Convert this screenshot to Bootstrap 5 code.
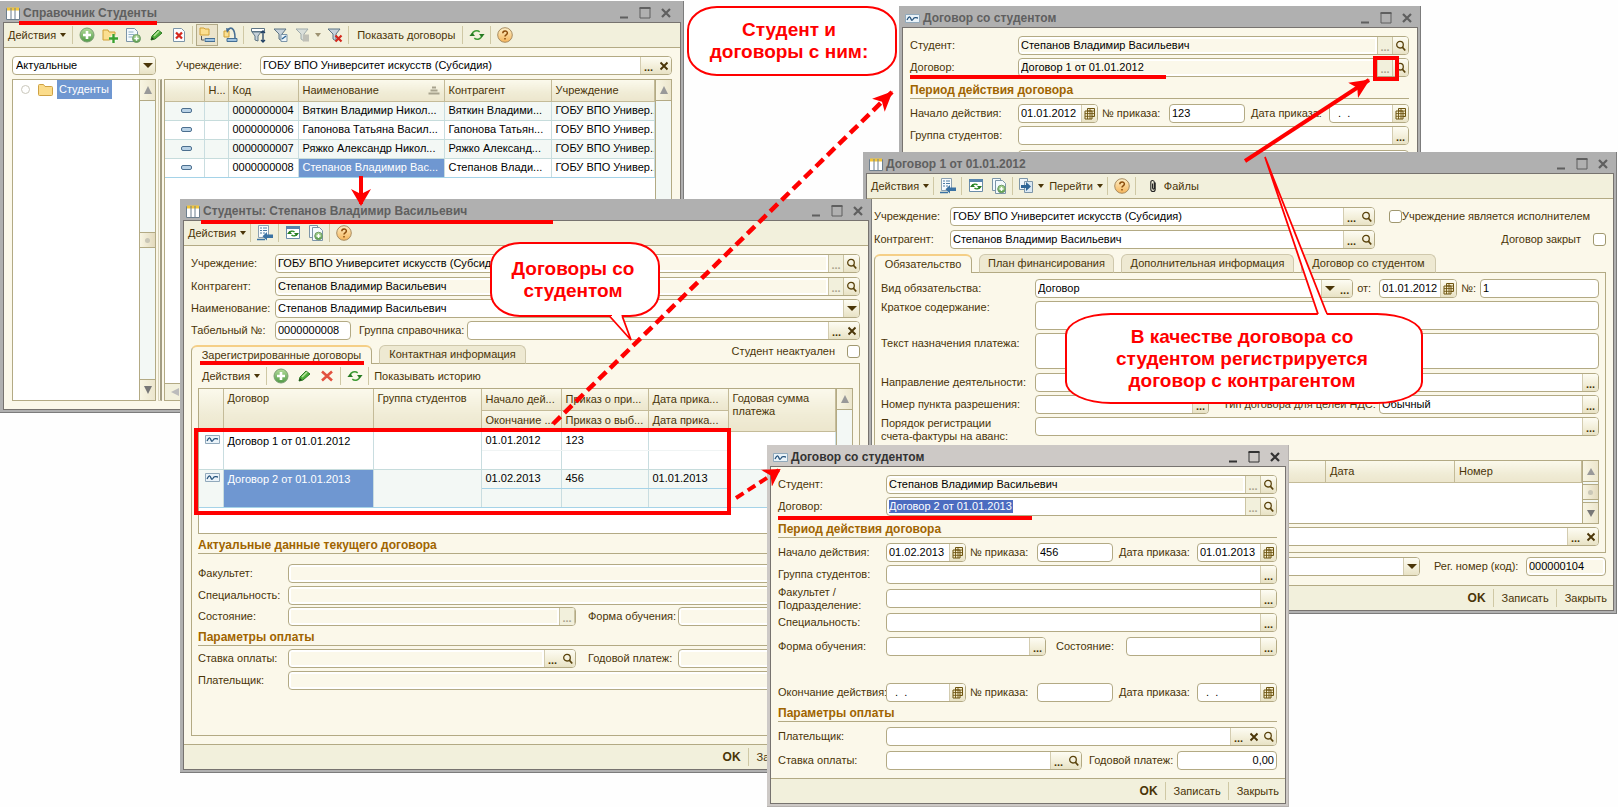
<!DOCTYPE html>
<html lang="ru">
<head>
<meta charset="utf-8">
<meta name="viewport" content="width=device-width, initial-scale=1">
<title>Справочник Студенты</title>
<link rel="stylesheet" href="https://cdn.jsdelivr.net/npm/bootstrap@5.3.0/dist/css/bootstrap.min.css">
<style>
:root{--ink:#4a3508;--line:#b3aa84;--cream:#fbf8ea;--bar:#f2f0dc;--red:#ff0000;--sel:#6f97d1}
body{background:#fefefe;font-family:"Liberation Sans",Arial,sans-serif;font-size:11px;line-height:13px;color:var(--ink)}
.desktop{position:relative;min-height:100vh;overflow:hidden}
.desktop svg{flex:none;display:block}
/* windows */
.win{position:absolute;background:#b0b0b0;padding:0 3px 3px;display:flex;flex-direction:column;border-right:1px solid #7c7c7c;border-bottom:1px solid #7c7c7c;--lab:108px}
.win-front{background:#cdc9c6;border-color:#b5b1ae}
.win-title{height:21px;padding:3px 5px 0 3px;font-weight:700;font-size:12px;color:#5f5f5f;gap:4px}
.win-title>svg:first-child{margin-right:-1px}
.win-front .win-title{color:#333}
.win-title span{flex:1}
.win-title button,.tbtn,.fld button,.sb button,.foot button,.tabx button{border:0;background:none;padding:0;color:inherit;line-height:inherit;font-size:inherit}
.win-title button{width:12px;height:12px;margin-left:5px}
.win-in{border:1px solid #77736f;margin-right:-1px;margin-bottom:-1px;background:var(--cream)}
.w-list{left:0;top:1px;width:684px;height:412px}
.w-card{left:899px;top:6px;width:522px;height:362px}
.w-contract{left:863px;top:152px;width:754px;height:462px}
.w-student{left:180px;top:199px;width:692px;height:574px}
.w-front{left:767px;top:445px;width:522px;height:362px}
.w-student{--lab:84px}.w-contract{--lab:76px}
/* toolbars */
.tbar{height:25px;background:var(--bar);border-bottom:1px solid var(--line);gap:5px;padding:0 4px}
.tbar-in{height:24px;background:none;border:0}
.tbtn{display:flex;align-items:center;justify-content:center;min-width:18px;height:22px;gap:4px;white-space:nowrap}
.tbtn.act{padding-right:2px}
.tbtn.txt{padding:0 3px}
.tbtn.on{min-width:22px;background:#ebe4cc;border:1px solid #b1a987;margin:0 -2px}
.tsep{width:1px;height:18px;margin:0 0 0 -1px;background:#cfc8a4}
.tri{width:0;height:0;border:3px solid transparent;border-top:4px solid var(--ink);border-bottom:0;flex:none}
.fld .tri{border-width:5px 5px 0}
/* form rows */
.pad{padding:8px 8px 0 7px}
.w-contract .pad{padding-right:7px}
.frow{display:flex;align-items:center;min-height:19px}
.frow>label{flex:none;white-space:nowrap}
.lab{width:var(--lab)}
.sect{height:20px;border-bottom:1px solid var(--line);font-weight:700;font-size:12px;color:#a06400;display:flex;align-items:flex-end;padding-bottom:1px;margin:0;line-height:13px}
.s2{margin-bottom:2px}.s3{margin-bottom:3px}.s4{margin-bottom:4px}.s5{margin-bottom:5px}.s10{margin-bottom:10px}.s27{margin-bottom:27px}
.fld{display:flex;height:19px;border:1px solid var(--line);border-radius:4px;background:#fff;overflow:hidden;min-width:0}
.fld.grow{flex:1 1 0}
.fld input,.fld select,.area{flex:1 1 0;min-width:0;border:0;background:none;padding:0 2px;color:#000;font-size:11px;line-height:15px;outline:0}
.fld select{appearance:none;padding:0 3px}
.fld.ro input{background:var(--cream);margin:2px;padding:0}
.fld button,.drop{width:15px;flex:none;background:linear-gradient(#fdfcf3,#f3efda 55%,#e8e2c5);display:flex;align-items:center;justify-content:center;font-weight:700}
.fld input+button,.fld select+.drop{border-left:1px solid #d3ccb0;width:16px}
.fld button.dots{padding-top:3px}
.fld button.off{color:#aaa58c;background:#f2f0dc;border:solid #cbc4a3;border-width:0 1px}
.area{height:29px;border:1px solid var(--line);border-radius:4px;background:#fff;resize:none;display:block}
.area.tall{height:36px}
.w80{width:80px}.w76{width:76px}
.chk{width:13px;height:13px;margin:0;appearance:none;border:1px solid #a09870;border-radius:3px;background:#fff;flex:none}
.picked{max-width:124px;height:13px;background:#4c6cc0!important;color:#fff!important}
/* tabs */
.tabx{display:flex;height:19px;gap:7px;margin-bottom:-1px;position:relative}
.tabx button{height:19px;background:#eee9d2;border:1px solid #cfc8ac;border-bottom-color:var(--line);border-radius:6px 6px 0 0;text-align:center;white-space:nowrap}
.tabx button.active{background:var(--cream);border-color:var(--line);border-top:2px solid #f5cf87;border-bottom:0}
.panel{border:1px solid var(--line);padding:0 6px}
.foot{height:25px;background:var(--bar);border-top:1px solid var(--line);display:flex;justify-content:flex-end;align-items:center;padding-right:6px;gap:8px}
.foot button{white-space:nowrap}
.foot .fw-bold{font-size:12px}
/* tables */
.box{border:1px solid var(--line);background:#fff;display:flex;overflow:hidden;min-height:0}
.grid{table-layout:fixed;width:100%;border-collapse:collapse;margin:0;color:#000}
.grid th,.grid td{height:19px;padding:0 0 0 4px;border-right:1px solid #c9dde0;border-bottom:1px solid #c6dcdc;overflow:hidden;white-space:nowrap;text-overflow:ellipsis;font-weight:400;line-height:13px;vertical-align:middle}
.grid th{height:21px;background:linear-gradient(#fbf9ec,#f0ecd6 60%,#ece6cd);border-color:#c4bb98;color:var(--ink)}
.grid td svg{margin:auto}
.grid td.open{text-overflow:clip}
.grid .tint td{background:#f3f8f5}
.grid .tint td.cur,.grid td.cur{background:var(--sel);color:#fff}
.grid .now td{border-bottom-color:#a5d3e8}
.hbar{height:17px;background:var(--bar);border-top:1px solid var(--line);padding-left:6px}
.sb{width:16px;flex:none;border-left:1px solid var(--line);background:#f3f8f5;display:flex;flex-direction:column}
.sb button{height:21px;background:linear-gradient(90deg,#f8f5e3,#ece6cd);border-bottom:1px solid var(--line);display:flex;align-items:center;justify-content:center}
.sb button:last-child:not(:first-child){border-bottom:0;border-top:1px solid var(--line)}
.sb i{height:16px;background:linear-gradient(90deg,#f8f5e3,#e3dabd);border:1px solid var(--line);border-width:1px 0;display:flex;align-items:center;justify-content:center}
.sb i::after{content:"";width:5px;height:5px;border-radius:50%;background:#c9c6b6}
.treecol{width:144px;flex:none}
.splitter{width:4px;flex:none;border:1px solid #d8d3ba;border-right:2px solid #a39d83;margin:0 2px}
.sel-tag{background:var(--sel);color:#fff;padding:3px 3px 3px 2px}
/* contract window */
.kright{width:231px;padding-left:14px}
.kright label{white-space:nowrap}
.ktabs button:first-child{width:98px}.ktabs button:nth-child(2){width:135px}.ktabs button:nth-child(3){width:173px}.ktabs button:nth-child(4){width:135px}
.kpanel{--lab:154px;padding:6px}
.kdate{width:78px}.knum{width:119px}
.kty{width:220px}.ktype{padding-left:14px;width:170px}
.ktable{margin-top:24px;height:64px}
.kreg{padding-left:14px;width:106px}
/* student window */
.stabs button:first-child{width:181px}.stabs button:nth-child(2){width:147px}
.sgroup{padding-left:8px;width:116px}
.stable{height:146px}
.stable .top{vertical-align:top;padding-top:3px}
.stable .grid td.soft{border-bottom-color:#f0f4f4}
.w-student .panel{--lab:90px}
.shalf{width:288px}.smid{padding-left:12px;width:102px}
/* student contract window */
.two{height:19px}
.dlab{padding-left:6px;width:84px}
.dstate{padding-left:10px;width:80px}.dst{width:151px}
.dyear{padding-left:7px;width:95px}.dyr{width:100px}
/* annotations */
.note{position:absolute;border:2px solid var(--red);background:#fff;color:var(--red);font-weight:700;font-size:19px;line-height:22px;display:flex;align-items:center;justify-content:center;text-align:center}
.n1{left:687px;top:6px;width:210px;height:70px;border-radius:30px/24px;padding-right:6px}
.n2{left:490px;top:242px;width:170px;height:75px;border-radius:30px/24px;padding-right:4px}
.n3{left:1065px;top:313px;width:358px;height:91px;border-radius:46px/22px;padding-right:4px}
.marks{position:absolute;left:0;top:0;pointer-events:none}
</style>
</head>
<body>
<svg width="0" height="0" class="position-absolute" aria-hidden="true">
<defs>
<linearGradient id="gg" x2="0" y2="1"><stop stop-color="#b5dd9c"/><stop offset="1" stop-color="#4f9a45"/></linearGradient>
<linearGradient id="go" x2="0" y2="1"><stop stop-color="#fdf0c8"/><stop offset="1" stop-color="#f5b45a"/></linearGradient>
<symbol id="grid" viewBox="0 0 14 13"><path d="M.5 1.500h13v11h-13z" fill="#fff" stroke="#6d7f8e"/><path d="M1 .5h12v3H1z" fill="#f3c63a"/><path d="M5 1v11M9 1v11" stroke="#6d7f8e"/></symbol>
<symbol id="sig" viewBox="0 0 15 9"><path d="M.5.5h14v8H.5z" fill="#eaf3f9" stroke="#91a9bb"/><path d="M2 6c2-4 3-4 4-1s2 0 3-1 2 0 4 0" fill="none" stroke="#25527b" stroke-width="1.300"/></symbol>
<symbol id="min" viewBox="0 0 12 12"><path d="M2 9.500h8v2H2z" fill="currentColor"/></symbol>
<symbol id="max" viewBox="0 0 12 12"><path d="M1 1h10v10H1z" fill="none" stroke="currentColor"/><path d="M.5 1h11" stroke="currentColor" stroke-width="2"/></symbol>
<symbol id="cls" viewBox="0 0 12 12"><path d="M2 2l8 8M10 2l-8 8" stroke="currentColor" stroke-width="2.200"/></symbol>
<symbol id="add" viewBox="0 0 16 16"><circle cx="8" cy="8" r="7" fill="url(#gg)" stroke="#7d9f74"/><path d="M8 4v8M4 8h8" stroke="#fff" stroke-width="2.600"/></symbol>
<symbol id="fadd" viewBox="0 0 16 16"><path d="M1 3h5l1 2h6v8H1z" fill="#fbdf90" stroke="#d0a036"/><path d="M11.500 7.500v8M7.500 11.500h8" stroke="#fff" stroke-width="4"/><path d="M11.500 7v9M7 11.500h9" stroke="#3aa22f" stroke-width="2.400"/></symbol>
<symbol id="dadd" viewBox="0 0 16 16"><path d="M1.500 1.500h8l3 3v10h-11z" fill="#f4fafd" stroke="#7c95a8"/><path d="M3.500 5h5M3.500 7.500h6M3.500 10h4" stroke="#8fb0c6"/><circle cx="11.500" cy="11.500" r="4" fill="url(#gg)" stroke="#6f9a66"/><path d="M11.500 9.300v4.400M9.300 11.500h4.400" stroke="#fff" stroke-width="1.500"/></symbol>
<symbol id="ddadd" viewBox="0 0 16 16"><path d="M1.500.5h8v12h-8z" fill="#f4fafd" stroke="#7c95a8"/><path d="M4.500 2.500h7l3 3v10h-10z" fill="#f4fafd" stroke="#7c95a8"/><circle cx="10.500" cy="11" r="3.800" fill="url(#gg)" stroke="#6f9a66"/><path d="M10.500 9v4M8.500 11h4" stroke="#fff" stroke-width="1.400"/></symbol>
<symbol id="pen" viewBox="0 0 16 16"><path d="M3 13l1-4 6-6 4 3-7 6z" fill="#4fae3a" stroke="#2c7a24"/><path d="M6 9l5-5" stroke="#b6e59b" stroke-width="1.600"/><path d="M3 13l1-3 2 2z" fill="#1f3f18"/></symbol>
<symbol id="ddel" viewBox="0 0 16 16"><path d="M2.500 1.500h8l3 3v10h-11z" fill="#fafdff" stroke="#7c95a8"/><path d="M5 5.500l6 6M11 5.500l-6 6" stroke="#d5281d" stroke-width="2.300"/></symbol>
<symbol id="rx" viewBox="0 0 16 16"><path d="M3 3.500l10 9M13 3.500l-10 9" stroke="#e2513f" stroke-width="2.600"/></symbol>
<symbol id="tree" viewBox="0 0 16 16"><path d="M1 1h4l1 1h4v6H1z" fill="#fbdf90" stroke="#d0a036"/><path d="M2.500 9v4H5" fill="none" stroke="#555"/><path d="M6 11.500h10v3H6z" fill="#9fc3e0" stroke="#436e94"/></symbol>
<symbol id="move" viewBox="0 0 16 16"><path d="M2 4h5v6H2z" fill="#fbdf90" stroke="#d0a036"/><path d="M5 4c3-5 8-4 8 7" fill="none" stroke="#486f93" stroke-width="1.600"/><path d="M4 1l4 1-3 4z" fill="#486f93"/><path d="M5 11.500h10v3H5z" fill="#9fc3e0" stroke="#436e94"/></symbol>
<symbol id="flt" viewBox="0 0 16 16"><path d="M1 2h12L9 7v7l-3-2V7z" fill="#c7d2da" stroke="#5d7484"/></symbol>
<symbol id="flt1" viewBox="0 0 16 16"><path d="M1.500 1.500h13v3h-13z" fill="#fff" stroke="#5d7484"/><path d="M2 5h9L8 9v5l-3-1V9z" fill="#c7d2da" stroke="#5d7484"/><path d="M13 4v11M11 6l2-2 2 2M11 13l2 2 2-2" fill="none" stroke="#1f3f63" stroke-width="1.300"/></symbol>
<symbol id="rfr" viewBox="0 0 16 16"><path d="M3.300 7.500C3.500 4 8 2.600 10.700 4.800M12.700 8.500c-.2 3.500-4.700 4.900-7.400 2.700" fill="none" stroke="#3d9a33" stroke-width="1.500"/><path d="M10 7h5.600l-2.800 3.400zM.4 9H6L3.200 5.600z" fill="#267a22"/></symbol>
<symbol id="hlp" viewBox="0 0 16 16"><circle cx="8" cy="8" r="7.300" fill="url(#go)" stroke="#a88c60"/><path d="M5.800 6.300c0-3 4.600-3 4.600-.3C10.400 8 8 7.700 8 9.600M8 11v1.600" fill="none" stroke="#8c4d0c" stroke-width="1.500"/></symbol>
<symbol id="arr" viewBox="0 0 16 16"><path d="M1.500.5h10v12h-10z" fill="#f7fbfd" stroke="#8ba0b1"/><path d="M3 3h2M6 3h4M3 5.500h2M6 5.500h4M3 8h2M6 8h2" stroke="#4f7ea5"/><path d="M16 9.500h-6V7l-4.500 4.200L10 15.500V13h6z" fill="#3a72a3"/><path d="M0 14.500h8" stroke="#3a72a3" stroke-width="1.500"/></symbol>
<symbol id="wrf" viewBox="0 0 16 16"><path d="M1.500 1.500h13v12h-13z" fill="#fff" stroke="#6b8ca8"/><path d="M1 1h14v3H1z" fill="#5684ad"/><path d="M4 8.500c0-2.500 4-3 5.500-1.500M12 8.500c0 2.500-4 3-5.500 1.500" fill="none" stroke="#2e8c28" stroke-width="1.400"/><path d="M9 8h5l-2.500 3zM2 9h5L4.500 6z" fill="#267a22"/></symbol>
<symbol id="goto" viewBox="0 0 16 16"><path d="M1.500.5h8v11h-8z" fill="#eef5fa" stroke="#7c95a8"/><path d="M6.500 3.500h8v11h-8z" fill="#dbe9f3" stroke="#7c95a8"/><path d="M3 7h5V4l5 4.500L8 13v-3H3z" fill="#2f6697"/></symbol>
<symbol id="clip" viewBox="0 0 8 16"><path d="M6.500 4v8c0 3-5 3-5 0V4c0-3 4-3 4 0v6c0 2-2 2-2 0V5" fill="none" stroke="#222" stroke-width="1.300"/></symbol>
<symbol id="mag" viewBox="0 0 11 12"><circle cx="5" cy="4.700" r="3.300" fill="none" stroke="#5a430c" stroke-width="1.300"/><path d="M7.200 7l3 3.500" stroke="#5a430c" stroke-width="1.800"/></symbol>
<symbol id="cal" viewBox="0 0 11 12"><path d="M3.500.5h7v8h-7z" fill="#f6efcf" stroke="#6d5410"/><path d="M1 3h7v8H1z" fill="#f6efcf" stroke="#6d5410"/><path d="M1 5.600h9M1 8.300h9M3.500 1v10M6 1v10M3 3h7" stroke="#6d5410" stroke-width=".9"/></symbol>
<symbol id="xx" viewBox="0 0 10 10"><path d="M1.500 1.500l7 7M8.500 1.500l-7 7" stroke="#4a3508" stroke-width="1.900"/></symbol>
<symbol id="dash" viewBox="0 0 11 5"><rect x=".5" y=".5" width="10" height="4" rx="1.500" fill="#b9d2e6" stroke="#4c6f8f"/></symbol>
<symbol id="fold" viewBox="0 0 15 12"><path d="M.5 1.500q0-1 1-1h4l1.500 2h6.500q1 0 1 1v7q0 1-1 1h-12q-1 0-1-1z" fill="#fbdc8b" stroke="#cfa244"/></symbol>
<symbol id="sort" viewBox="0 0 12 9"><path d="M4 1.500h4M2.500 4.500h7M.5 7.500h11" stroke="#a8a38e" stroke-width="2"/></symbol>
</defs>
</svg>

<main class="desktop">

<!-- Справочник Студенты -->
<section class="win w-list">
  <header class="win-title d-flex align-items-center pe-2"><svg width="14" height="13"><use href="#grid"/></svg><span>Справочник Студенты</span>
    <button aria-label="Свернуть"><svg width="12" height="12"><use href="#min"/></svg></button><button aria-label="Развернуть"><svg width="12" height="12"><use href="#max"/></svg></button><button class="me-n1" aria-label="Закрыть"><svg width="12" height="12"><use href="#cls"/></svg></button></header>
  <div class="win-in flex-fill d-flex flex-column">
    <div class="tbar d-flex align-items-center">
      <button class="tbtn act">Действия <i class="tri"></i></button><i class="tsep"></i>
      <button class="tbtn" aria-label="Добавить"><svg width="16" height="16"><use href="#add"/></svg></button>
      <button class="tbtn" aria-label="Добавить группу"><svg width="16" height="16"><use href="#fadd"/></svg></button>
      <button class="tbtn" aria-label="Скопировать"><svg width="16" height="16"><use href="#dadd"/></svg></button>
      <button class="tbtn" aria-label="Изменить"><svg width="16" height="16"><use href="#pen"/></svg></button>
      <button class="tbtn" aria-label="Пометить на удаление"><svg width="16" height="16"><use href="#ddel"/></svg></button><i class="tsep"></i>
      <button class="tbtn on" aria-label="Иерархия"><svg width="16" height="16"><use href="#tree"/></svg></button>
      <button class="tbtn" aria-label="Переместить"><svg width="16" height="16"><use href="#move"/></svg></button><i class="tsep"></i>
      <button class="tbtn" aria-label="Отбор"><svg width="16" height="16"><use href="#flt1"/></svg></button>
      <button class="tbtn" aria-label="Отбор по значению"><svg width="16" height="16"><use href="#flt"/><path d="M8 7.500h6v7H8z" fill="#eef6fb" stroke="#7c95a8"/><path d="M9 12l4-3" stroke="#2f6697" stroke-width="1.500"/></svg></button>
      <button class="tbtn" aria-label="История отборов"><svg width="16" height="16" opacity=".55"><use href="#flt"/><path d="M8 7.500h6v7H8z" fill="#999"/></svg><i class="tri opacity-50"></i></button>
      <button class="tbtn" aria-label="Отключить отбор"><svg width="16" height="16"><use href="#flt"/><path d="M8.500 8.500l6 6M14.500 8.500l-6 6" stroke="#d5281d" stroke-width="2.200"/></svg></button><i class="tsep"></i>
      <button class="tbtn txt">Показать договоры</button><i class="tsep"></i>
      <button class="tbtn" aria-label="Обновить"><svg width="16" height="16"><use href="#rfr"/></svg></button><i class="tsep"></i>
      <button class="tbtn" aria-label="Справка"><svg width="16" height="16"><use href="#hlp"/></svg></button>
    </div>
    <div class="p-2 flex-fill d-flex flex-column">
      <div class="frow s4">
        <div class="fld treecol me-3"><select aria-label="Состояние"><option>Актуальные</option></select><span class="drop"><i class="tri"></i></span></div>
        <label for="l-org" class="lab ps-1" style="--lab:88px">Учреждение:</label>
        <div class="fld grow"><input id="l-org" value="ГОБУ ВПО Университет искусств (Субсидия)"><button class="dots">...</button><button aria-label="Очистить"><svg width="10" height="10"><use href="#xx"/></svg></button></div>
      </div>
      <div class="flex-fill d-flex">
        <div class="box treecol">
          <div class="flex-fill d-flex align-items-start ps-2">
            <div class="d-flex align-items-center"><svg width="9" height="9" class="me-2"><circle cx="4.500" cy="4.500" r="4" fill="none" stroke="#c9c6bb"/></svg><svg width="15" height="12" class="me-1"><use href="#fold"/></svg><span class="sel-tag">Студенты</span></div>
          </div>
          <div class="sb"><button aria-label="Вверх"><svg width="8" height="8"><path d="M4 0l4 8H0z" fill="#999"/></svg></button><b class="flex-fill"></b><i></i><b class="flex-fill"></b><button aria-label="Вниз"><svg width="8" height="8"><path d="M4 8l4-8H0z" fill="#777"/></svg></button></div>
        </div>
        <div class="splitter"></div>
        <div class="box flex-fill">
          <div class="flex-fill d-flex flex-column">
          <table class="grid">
            <colgroup><col style="width:39px"><col style="width:24px"><col style="width:70px"><col style="width:146px"><col style="width:107px"><col></colgroup>
            <thead><tr><th></th><th>Н...</th><th>Код</th><th><div class="d-flex align-items-center justify-content-between pe-1">Наименование<svg width="12" height="9"><use href="#sort"/></svg></div></th><th>Контрагент</th><th>Учреждение</th></tr></thead>
            <tbody>
            <tr class="tint"><td><svg width="11" height="5"><use href="#dash"/></svg></td><td></td><td>0000000004</td><td>Вяткин Владимир Никол...</td><td>Вяткин Владими...</td><td class="open">ГОБУ ВПО Универ..</td></tr>
            <tr><td><svg width="11" height="5"><use href="#dash"/></svg></td><td></td><td>0000000006</td><td>Гапонова Татьяна Васил...</td><td>Гапонова Татьян...</td><td class="open">ГОБУ ВПО Универ..</td></tr>
            <tr class="tint"><td><svg width="11" height="5"><use href="#dash"/></svg></td><td></td><td>0000000007</td><td>Ряжко Александр Никол...</td><td>Ряжко Александ...</td><td class="open">ГОБУ ВПО Универ..</td></tr>
            <tr class="now"><td><svg width="11" height="5"><use href="#dash"/></svg></td><td></td><td>0000000008</td><td class="cur">Степанов Владимир Вас...</td><td>Степанов Влади...</td><td class="open">ГОБУ ВПО Универ..</td></tr>
            </tbody>
          </table>
          <div class="mt-auto hbar d-flex align-items-center"><svg width="8" height="8"><path d="M0 4l8-4v8z" fill="#bbb"/></svg></div>
          </div>
          <div class="sb"><button aria-label="Вверх"><svg width="8" height="8"><path d="M4 0l4 8H0z" fill="#999"/></svg></button></div>
        </div>
      </div>
    </div>
  </div>
</section>

<!-- Договор со студентом: первый договор -->
<section class="win w-card">
  <header class="win-title d-flex align-items-center pe-1"><svg width="15" height="9"><use href="#sig"/></svg><span>Договор со студентом</span>
    <button aria-label="Свернуть"><svg width="12" height="12"><use href="#min"/></svg></button><button aria-label="Развернуть"><svg width="12" height="12"><use href="#max"/></svg></button><button aria-label="Закрыть"><svg width="12" height="12"><use href="#cls"/></svg></button></header>
  <div class="win-in flex-fill">
    <div class="pad">
      <div class="frow s3"><label class="lab" for="c-st">Студент:</label><div class="fld ro grow"><input id="c-st" readonly value="Степанов Владимир Васильевич"><button class="dots off">...</button><button aria-label="Открыть"><svg width="11" height="12"><use href="#mag"/></svg></button></div></div>
      <div class="frow s2"><label class="lab" for="c-dg">Договор:</label><div class="fld ro grow"><input id="c-dg" readonly value="Договор 1 от 01.01.2012"><button class="dots off">...</button><button aria-label="Открыть"><svg width="11" height="12"><use href="#mag"/></svg></button></div></div>
      <h2 class="sect s5">Период действия договора</h2>
      <div class="frow s3"><label class="lab" for="c-n">Начало действия:</label><div class="fld w80"><input id="c-n" value="01.01.2012"><button aria-label="Календарь"><svg width="11" height="12"><use href="#cal"/></svg></button></div>
        <label for="c-p" class="ps-1 flex-grow-1">№ приказа:</label><div class="fld w76"><input id="c-p" value="123"></div>
        <label for="c-d" class="dlab">Дата приказа:</label><div class="fld w80"><input id="c-d" value="  .  ."><button aria-label="Календарь"><svg width="11" height="12"><use href="#cal"/></svg></button></div></div>
      <div class="frow s5"><label class="lab" for="c-g">Группа студентов:</label><div class="fld grow"><input id="c-g"><button class="dots">...</button></div></div>
      <div class="frow"><span class="lab"></span><div class="fld grow"><input aria-label="Факультет"></div></div>
    </div>
  </div>
</section>

<!-- Договор с контрагентом -->
<section class="win w-contract">
  <header class="win-title d-flex align-items-center pe-1"><svg width="14" height="13"><use href="#grid"/></svg><span>Договор 1 от 01.01.2012</span>
    <button aria-label="Свернуть"><svg width="12" height="12"><use href="#min"/></svg></button><button aria-label="Развернуть"><svg width="12" height="12"><use href="#max"/></svg></button><button aria-label="Закрыть"><svg width="12" height="12"><use href="#cls"/></svg></button></header>
  <div class="win-in flex-fill d-flex flex-column">
    <div class="tbar d-flex align-items-center">
      <button class="tbtn">Действия <i class="tri"></i></button><i class="tsep"></i>
      <button class="tbtn" aria-label="Записать"><svg width="16" height="16"><use href="#arr"/></svg></button><i class="tsep"></i>
      <button class="tbtn" aria-label="Перечитать"><svg width="16" height="16"><use href="#wrf"/></svg></button>
      <button class="tbtn" aria-label="Скопировать"><svg width="16" height="16"><use href="#ddadd"/></svg></button><i class="tsep"></i>
      <button class="tbtn" aria-label="На основании"><svg width="16" height="16"><use href="#goto"/></svg><i class="tri"></i></button>
      <button class="tbtn">Перейти <i class="tri"></i></button><i class="tsep"></i>
      <button class="tbtn" aria-label="Справка"><svg width="16" height="16"><use href="#hlp"/></svg></button><i class="tsep"></i>
      <button class="tbtn ps-2"><svg width="8" height="14"><use href="#clip"/></svg>&nbsp;Файлы</button>
    </div>
    <div class="pad flex-fill d-flex flex-column">
      <div class="frow s4"><label class="lab" for="k-o">Учреждение:</label><div class="fld grow"><input id="k-o" value="ГОБУ ВПО Университет искусств (Субсидия)"><button class="dots">...</button><button aria-label="Открыть"><svg width="11" height="12"><use href="#mag"/></svg></button></div>
        <div class="kright d-flex align-items-center"><input type="checkbox" class="chk" id="k-i"><label for="k-i">Учреждение является исполнителем</label></div></div>
      <div class="frow s5"><label class="lab" for="k-k">Контрагент:</label><div class="fld grow"><input id="k-k" value="Степанов Владимир Васильевич"><button class="dots">...</button><button aria-label="Открыть"><svg width="11" height="12"><use href="#mag"/></svg></button></div>
        <div class="kright d-flex align-items-center justify-content-end"><label for="k-z" class="me-2 pe-1">Договор закрыт</label><input type="checkbox" class="chk" id="k-z"></div></div>
      <div class="tabx ktabs"><button class="active">Обязательство</button><button>План финансирования</button><button>Дополнительная информация</button><button>Договор со студентом</button></div>
      <div class="panel kpanel">
        <div class="frow s3"><label class="lab" for="k-v">Вид обязательства:</label><div class="fld grow"><input id="k-v" value="Договор"><button aria-label="Список"><i class="tri"></i></button><button class="dots">...</button></div>
          <label for="k-ot" class="ps-1 pe-2">от:</label><div class="fld kdate"><input id="k-ot" value="01.01.2012"><button aria-label="Календарь"><svg width="11" height="12"><use href="#cal"/></svg></button></div>
          <label for="k-no" class="px-1">№:</label><div class="fld knum"><input id="k-no" value="1"></div></div>
        <div class="frow align-items-start s3"><label class="lab" for="k-kr">Краткое содержание:</label><textarea id="k-kr" class="area" rows="1"></textarea></div>
        <div class="frow align-items-start s4"><label class="lab pt-1" for="k-tn">Текст назначения платежа:</label><textarea id="k-tn" class="area tall" rows="2"></textarea></div>
        <div class="frow s3"><label class="lab" for="k-na">Направление деятельности:</label><div class="fld grow"><input id="k-na"><button class="dots">...</button></div></div>
        <div class="frow s3"><label class="lab" for="k-np">Номер пункта разрешения:</label><div class="fld grow"><input id="k-np"><button class="dots">...</button></div>
          <label for="k-ty" class="ktype">Тип договора для целей НДС:</label><div class="fld kty"><input id="k-ty" value="Обычный"><button class="dots">...</button></div></div>
        <div class="frow two align-items-start"><label class="lab" for="k-po">Порядок регистрации<br>счета-фактуры на аванс:</label><div class="fld grow"><input id="k-po"><button class="dots">...</button></div></div>
        <div class="box ktable s3"><table class="grid flex-fill align-self-start"><colgroup><col><col style="width:129px"><col style="width:127px"></colgroup><thead><tr><th></th><th>Дата</th><th>Номер</th></tr></thead></table>
          <div class="sb"><button aria-label="Вверх"><svg width="8" height="7"><path d="M4 0l4 7H0z" fill="#999"/></svg></button><b class="flex-fill"></b><i></i><b class="flex-fill"></b><button aria-label="Вниз"><svg width="8" height="7"><path d="M4 7l4-7H0z" fill="#777"/></svg></button></div></div>
        <div class="fld"><input aria-label="Основание"><button class="dots">...</button><button aria-label="Очистить"><svg width="10" height="10"><use href="#xx"/></svg></button></div>
      </div>
      <div class="frow mt-1"><span class="lab"></span><div class="fld grow"><select aria-label="Ответственный"><option></option></select><span class="drop"><i class="tri"></i></span></div>
        <label for="k-rn" class="kreg">Рег. номер (код):</label><div class="fld ro w80"><input id="k-rn" readonly value="000000104"></div></div>
    </div>
    <div class="foot"><button class="fw-bold">OK</button><i class="tsep"></i><button>Записать</button><i class="tsep"></i><button>Закрыть</button></div>
  </div>
</section>

<!-- Карточка студента -->
<section class="win w-student">
  <header class="win-title d-flex align-items-center pe-1"><svg width="14" height="13"><use href="#grid"/></svg><span>Студенты: Степанов Владимир Васильевич</span>
    <button aria-label="Свернуть"><svg width="12" height="12"><use href="#min"/></svg></button><button aria-label="Развернуть"><svg width="12" height="12"><use href="#max"/></svg></button><button aria-label="Закрыть"><svg width="12" height="12"><use href="#cls"/></svg></button></header>
  <div class="win-in flex-fill d-flex flex-column">
    <div class="tbar d-flex align-items-center">
      <button class="tbtn">Действия <i class="tri"></i></button><i class="tsep"></i>
      <button class="tbtn" aria-label="Записать"><svg width="16" height="16"><use href="#arr"/></svg></button><i class="tsep"></i>
      <button class="tbtn" aria-label="Перечитать"><svg width="16" height="16"><use href="#wrf"/></svg></button>
      <button class="tbtn" aria-label="Скопировать"><svg width="16" height="16"><use href="#ddadd"/></svg></button><i class="tsep"></i>
      <button class="tbtn" aria-label="Справка"><svg width="16" height="16"><use href="#hlp"/></svg></button>
    </div>
    <div class="pad pb-2 flex-fill d-flex flex-column">
      <div class="frow s4"><label class="lab" for="s-o">Учреждение:</label><div class="fld ro grow"><input id="s-o" readonly value="ГОБУ ВПО Университет искусств (Субсидия)"><button class="dots off">...</button><button aria-label="Открыть"><svg width="11" height="12"><use href="#mag"/></svg></button></div></div>
      <div class="frow s3"><label class="lab" for="s-k">Контрагент:</label><div class="fld ro grow"><input id="s-k" readonly value="Степанов Владимир Васильевич"><button class="dots off">...</button><button aria-label="Открыть"><svg width="11" height="12"><use href="#mag"/></svg></button></div></div>
      <div class="frow s3"><label class="lab" for="s-n">Наименование:</label><div class="fld grow"><input id="s-n" value="Степанов Владимир Васильевич"><button aria-label="Список"><i class="tri"></i></button></div></div>
      <div class="frow s5"><label class="lab" for="s-t">Табельный №:</label><div class="fld w76"><input id="s-t" value="0000000008"></div><label for="s-g" class="sgroup">Группа справочника:</label><div class="fld grow"><input id="s-g"><button class="dots">...</button><button aria-label="Очистить"><svg width="10" height="10"><use href="#xx"/></svg></button></div></div>
      <div class="tabx stabs"><button class="active">Зарегистрированные договоры</button><button>Контактная информация</button><div class="ms-auto d-flex align-items-start"><label for="s-a" class="me-2 pe-1">Студент неактуален</label><input type="checkbox" class="chk" id="s-a"></div></div>
      <div class="panel flex-fill">
        <div class="tbar tbar-in d-flex align-items-center">
          <button class="tbtn act">Действия <i class="tri"></i></button><i class="tsep"></i>
          <button class="tbtn" aria-label="Добавить"><svg width="16" height="16"><use href="#add"/></svg></button>
          <button class="tbtn" aria-label="Изменить"><svg width="16" height="16"><use href="#pen"/></svg></button>
          <button class="tbtn" aria-label="Удалить"><svg width="16" height="16"><use href="#rx"/></svg></button><i class="tsep"></i>
          <button class="tbtn" aria-label="Обновить"><svg width="16" height="16"><use href="#rfr"/></svg></button><i class="tsep"></i>
          <button class="tbtn">Показывать историю</button>
        </div>
        <div class="box stable">
          <table class="grid align-self-start flex-fill">
            <colgroup><col style="width:24px"><col style="width:150px"><col style="width:108px"><col style="width:80px"><col style="width:87px"><col style="width:80px"><col></colgroup>
            <thead>
            <tr><th rowspan="2"></th><th rowspan="2" class="top">Договор</th><th rowspan="2" class="top">Группа студентов</th><th>Начало дей...</th><th>Приказ о при...</th><th>Дата прика...</th><th rowspan="2" class="top text-wrap">Годовая сумма платежа</th></tr>
            <tr><th>Окончание ...</th><th>Приказ о выб...</th><th>Дата прика...</th></tr>
            </thead>
            <tbody>
            <tr><td rowspan="2" class="top"><svg width="15" height="9"><use href="#sig"/></svg></td><td rowspan="2" class="top">Договор 1 от 01.01.2012</td><td rowspan="2"></td><td class="soft">01.01.2012</td><td class="soft">123</td><td class="soft"></td><td rowspan="2"></td></tr>
            <tr><td></td><td></td><td></td></tr>
            <tr class="tint now"><td rowspan="2" class="top"><svg width="15" height="9"><use href="#sig"/></svg></td><td rowspan="2" class="cur top">Договор 2 от 01.01.2013</td><td rowspan="2"></td><td>01.02.2013</td><td>456</td><td>01.01.2013</td><td rowspan="2"></td></tr>
            <tr class="tint now"><td></td><td></td><td></td></tr>
            </tbody>
          </table>
          <div class="sb"><button aria-label="Вверх"><svg width="8" height="8"><path d="M4 0l4 8H0z" fill="#999"/></svg></button></div>
        </div>
        <h2 class="sect s10">Актуальные данные текущего договора</h2>
        <div class="frow s3"><label class="lab" for="s-f">Факультет:</label><div class="fld ro grow"><input id="s-f" readonly></div></div>
        <div class="frow s2"><label class="lab" for="s-s">Специальность:</label><div class="fld ro grow"><input id="s-s" readonly></div></div>
        <div class="frow"><label class="lab" for="s-ss">Состояние:</label><div class="fld ro shalf"><input id="s-ss" readonly><button class="dots off">...</button></div><label for="s-fo" class="smid">Форма обучения:</label><div class="fld ro grow"><input id="s-fo" readonly></div></div>
        <h2 class="sect s3">Параметры оплаты</h2>
        <div class="frow s3"><label class="lab" for="s-st">Ставка оплаты:</label><div class="fld ro shalf"><input id="s-st" readonly><button class="dots">...</button><button aria-label="Открыть"><svg width="11" height="12"><use href="#mag"/></svg></button></div><label for="s-gp" class="smid">Годовой платеж:</label><div class="fld ro grow"><input id="s-gp" readonly></div></div>
        <div class="frow"><label class="lab" for="s-pl">Плательщик:</label><div class="fld ro grow"><input id="s-pl" readonly></div></div>
      </div>
    </div>
    <div class="foot"><button class="fw-bold">OK</button><i class="tsep"></i><button>Записать</button><i class="tsep"></i><button>Закрыть</button></div>
  </div>
</section>

<!-- Договор со студентом: второй договор -->
<section class="win win-front w-front">
  <header class="win-title d-flex align-items-center pe-1"><svg width="15" height="9"><use href="#sig"/></svg><span>Договор со студентом</span>
    <button aria-label="Свернуть"><svg width="12" height="12"><use href="#min"/></svg></button><button aria-label="Развернуть"><svg width="12" height="12"><use href="#max"/></svg></button><button aria-label="Закрыть"><svg width="12" height="12"><use href="#cls"/></svg></button></header>
  <div class="win-in flex-fill d-flex flex-column">
    <div class="pad flex-fill">
      <div class="frow s3"><label class="lab" for="d-st">Студент:</label><div class="fld ro grow"><input id="d-st" readonly value="Степанов Владимир Васильевич"><button class="dots off">...</button><button aria-label="Открыть"><svg width="11" height="12"><use href="#mag"/></svg></button></div></div>
      <div class="frow s2"><label class="lab" for="d-dg">Договор:</label><div class="fld ro grow"><input id="d-dg" class="picked" readonly value="Договор 2 от 01.01.2013"><button class="dots off ms-auto">...</button><button aria-label="Открыть"><svg width="11" height="12"><use href="#mag"/></svg></button></div></div>
      <h2 class="sect s5">Период действия договора</h2>
      <div class="frow s3"><label class="lab" for="d-n">Начало действия:</label><div class="fld w80"><input id="d-n" value="01.02.2013"><button aria-label="Календарь"><svg width="11" height="12"><use href="#cal"/></svg></button></div>
        <label for="d-p" class="ps-1 flex-grow-1">№ приказа:</label><div class="fld w76"><input id="d-p" value="456"></div>
        <label for="d-d" class="dlab">Дата приказа:</label><div class="fld w80"><input id="d-d" value="01.01.2013"><button aria-label="Календарь"><svg width="11" height="12"><use href="#cal"/></svg></button></div></div>
      <div class="frow s5"><label class="lab" for="d-g">Группа студентов:</label><div class="fld grow"><input id="d-g"><button class="dots">...</button></div></div>
      <div class="frow s5 two"><label class="lab" for="d-f">Факультет /<br>Подразделение:</label><div class="fld grow"><input id="d-f"><button class="dots">...</button></div></div>
      <div class="frow s5"><label class="lab" for="d-s">Специальность:</label><div class="fld grow"><input id="d-s"><button class="dots">...</button></div></div>
      <div class="frow s27"><label class="lab" for="d-fo">Форма обучения:</label><div class="fld grow"><input id="d-fo"><button class="dots">...</button></div><label for="d-ss" class="dstate">Состояние:</label><div class="fld dst"><input id="d-ss"><button class="dots">...</button></div></div>
      <div class="frow"><label class="lab" for="d-e">Окончание действия:</label><div class="fld w80"><input id="d-e" value="  .  ."><button aria-label="Календарь"><svg width="11" height="12"><use href="#cal"/></svg></button></div>
        <label for="d-p2" class="ps-1 flex-grow-1">№ приказа:</label><div class="fld w76"><input id="d-p2"></div>
        <label for="d-d2" class="dlab">Дата приказа:</label><div class="fld w80"><input id="d-d2" value="  .  ."><button aria-label="Календарь"><svg width="11" height="12"><use href="#cal"/></svg></button></div></div>
      <h2 class="sect s5">Параметры оплаты</h2>
      <div class="frow s5"><label class="lab" for="d-pl">Плательщик:</label><div class="fld grow"><input id="d-pl"><button class="dots">...</button><button aria-label="Очистить"><svg width="10" height="10"><use href="#xx"/></svg></button><button aria-label="Открыть"><svg width="11" height="12"><use href="#mag"/></svg></button></div></div>
      <div class="frow"><label class="lab" for="d-sv">Ставка оплаты:</label><div class="fld grow"><input id="d-sv"><button class="dots">...</button><button aria-label="Открыть"><svg width="11" height="12"><use href="#mag"/></svg></button></div><label for="d-gp" class="dyear">Годовой платеж:</label><div class="fld dyr"><input id="d-gp" class="text-end" value="0,00"></div></div>
    </div>
    <div class="foot"><button class="fw-bold">OK</button><i class="tsep"></i><button>Записать</button><i class="tsep"></i><button>Закрыть</button></div>
  </div>
</section>

<!-- Пояснения -->
<div class="note n1"><div>Студент и<br>договоры с ним:</div></div>
<div class="note n2"><div>Договоры со<br>студентом</div></div>
<div class="note n3"><div>В качестве договора со<br>студентом регистрируется<br>договор с контрагентом</div></div>
<svg class="marks" width="1618" height="807" fill="none" stroke="#f00" stroke-width="4" aria-hidden="true">
  <defs><marker id="head" markerUnits="userSpaceOnUse" markerWidth="22" markerHeight="20" refX="19" refY="10" orient="auto"><path d="M0 1l20 9-20 9 5-9z" fill="#f00" stroke="none"/></marker>
  <marker id="head2" markerUnits="userSpaceOnUse" markerWidth="18" markerHeight="20" refX="15" refY="10" orient="auto"><path d="M0 0l17 10-17 10 5-10z" fill="#f00" stroke="none"/></marker></defs>
  <path d="M610 316l21 25-9-25z" fill="#fff" stroke="none"/><path d="M609 315.500l22 24.500-9-24.500" stroke-width="1.800"/><path d="M612 315.800h9.500" stroke="#fff" stroke-width="2.600"/>
  <path d="M1318 315L1265 157l62 158z" fill="#fff" stroke="none"/><path d="M1318 314L1265 157l62 157" stroke-width="1.800"/><path d="M1319.500 314h6.500" stroke="#fff" stroke-width="2.600"/>
  <path d="M19 23h138M201 222h352M200 363h164M910 77h256M778 518h254"/>
  <path d="M196 430h533v83H196zM1375 58h22v21h-22z"/>
  <path d="M361 176v28" marker-end="url(#head2)"/>
  <path d="M553 424L892 92" stroke-dasharray="10.500 5.500" stroke-width="4.500" marker-end="url(#head)"/>
  <path d="M736 498L779 470" stroke-dasharray="9 5" marker-end="url(#head2)"/>
  <path d="M1245 161L1369 80" marker-end="url(#head)"/>
</svg>
</main>
<script src="https://cdn.jsdelivr.net/npm/bootstrap@5.3.0/dist/js/bootstrap.bundle.min.js"></script>
</body>
</html>
